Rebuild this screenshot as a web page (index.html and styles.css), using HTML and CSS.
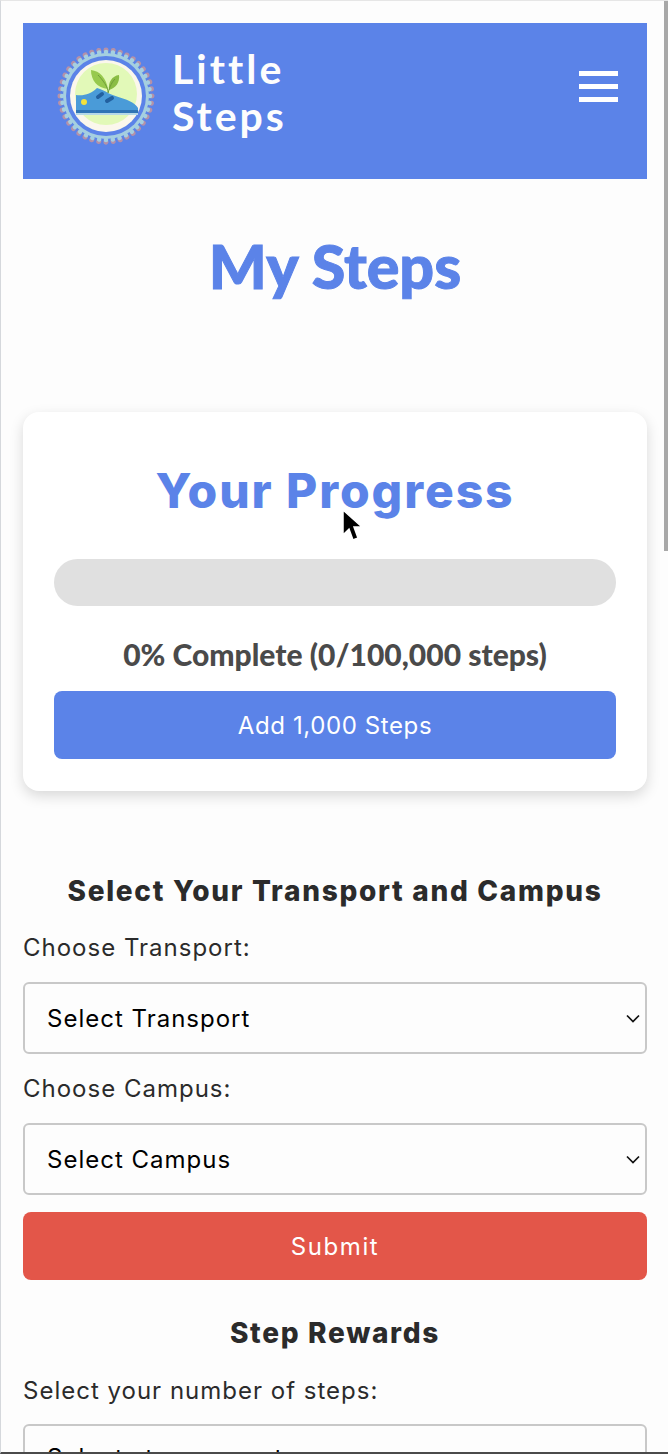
FILE: index.html
```html
<!DOCTYPE html>
<html lang="en">
<head>
    <meta charset="UTF-8">
    <meta name="viewport" content="width=device-width, initial-scale=1.0">
    <title>Little Steps - My Steps</title>
    <link rel="stylesheet" href="styles.css">
</head>
<body>
    <header class="site-header">
        <div class="brand">
            <svg class="logo" width="100" height="100" viewBox="0 0 100 100" aria-hidden="true">
                <circle cx="50" cy="50" r="46" fill="none" stroke="#b591a8" stroke-width="5" stroke-linecap="round" stroke-dasharray="0.01 0.99" pathLength="40"/>
                <circle cx="50" cy="50" r="44" fill="none" stroke="#a5cfe0" stroke-width="4.5" stroke-linecap="round" stroke-dasharray="0.01 0.99" pathLength="40"/>
                <circle cx="50" cy="50" r="43" fill="#a5cfe0"/>
                <circle cx="50" cy="50" r="40" fill="#5b83e8"/>
                <circle cx="50" cy="50" r="36" fill="#fbf7ec"/>
                <circle cx="50" cy="48" r="31" fill="#e2f9b8"/>
                <path d="M52 43C50 32 44 25 35 24C35 34 41 42 52 43Z" fill="#97c94d"/>
                <path d="M53 44C60 42 64 36 63 29C56 30 52 36 53 44Z" fill="#8abd45"/>
                <path d="M52 47C53 42 46 33 42 29M52 47C54 40 56 36 59 33" fill="none" stroke="#6f9c3a" stroke-width="1"/>
                <path d="M20 49C28 50 35 48 41 42C45 43 49 45 52 47C60 51 78 54 82 62V66H20Z" fill="#4a9bd8"/>
                <rect x="20" y="64" width="62" height="3" fill="#2f74b5"/>
                <rect x="20" y="67" width="62" height="2" fill="#b5d8e8"/>
                <path d="M42 51L46 48M51 55L56 52" stroke="#22609f" stroke-width="4" stroke-linecap="round"/>
                <circle cx="28" cy="56" r="3" fill="#f3e23c"/>
            </svg>
            <div class="brand-name">Little<br>Steps</div>
        </div>
        <div class="menu-icon">
            <span></span>
            <span></span>
            <span></span>
        </div>
    </header>

    <h1 class="page-title">My Steps</h1>

    <section class="progress-card">
        <h2>Your Progress</h2>
        <div class="progress-bar"></div>
        <p class="progress-text">0% Complete (0/100,000 steps)</p>
        <button class="button">Add 1,000 Steps</button>
    </section>

    <section class="form-section">
        <h3>Select Your Transport and Campus</h3>
        <label for="transport">Choose Transport:</label>
        <select id="transport"><option>Select Transport</option></select>
        <label for="campus">Choose Campus:</label>
        <select id="campus"><option>Select Campus</option></select>
        <button class="button button-red">Submit</button>
    </section>

    <section class="form-section rewards">
        <h3>Step Rewards</h3>
        <label for="steps">Select your number of steps:</label>
        <select id="steps"><option>Select step amount</option></select>
    </section>

    <div class="scroll-thumb"></div>
    <svg class="cursor" width="22" height="34" viewBox="0 0 22 34" aria-hidden="true">
        <path d="M2 1V26L8 20L12 31L17 29L13 18H21Z" fill="#000" stroke="#fff" stroke-width="1.5"/>
    </svg>
</body>
</html>
```

FILE: styles.css
```css
html {
    height: 100%;
    overflow: hidden;
}
body {
    font-family: 'Inter', 'Open Sans', sans-serif;
    background-color: #fdfdfd;
    color: #2b2b2b;
    margin: 0;
    padding: 22px 21px 0 22px;
    border-left: 1px solid #d5d8dc;
    border-top: 1px solid #e6e6e6;
    border-bottom: 2px solid #4a4a4a;
    height: 100%;
    box-sizing: border-box;
    overflow: hidden;
    position: relative;
}
.site-header {
    display: flex;
    justify-content: space-between;
    align-items: flex-start;
    background-color: #5b83e8;
    height: 156px;
    box-sizing: border-box;
    padding: 23px 29px 0 33px;
}
.brand {
    display: flex;
    align-items: flex-start;
    gap: 16px;
}
.brand-name {
    font-family: 'Lato', sans-serif;
    font-weight: 700;
    font-size: 41px;
    line-height: 47px;
    letter-spacing: 3px;
    color: #fdfdfd;
    margin-top: -1px;
}
.menu-icon {
    display: flex;
    flex-direction: column;
    gap: 8px;
    margin-top: 25px;
}
.menu-icon span {
    display: block;
    width: 39px;
    height: 5px;
    background-color: #fff;
}
.page-title {
    font-family: 'Lato', sans-serif;
    font-weight: 900;
    font-size: 61px;
    line-height: 72px;
    color: #5b83e8;
    text-align: center;
    margin: 51px 0 110px;
    -webkit-text-stroke: 1px #5b83e8;
}
.progress-card {
    background-color: #fff;
    border-radius: 16px;
    box-shadow: 0 5px 14px rgba(0, 0, 0, 0.15);
    padding: 48px 31px 32px;
    text-align: center;
}
.progress-card h2 {
    font-size: 48px;
    line-height: 62px;
    font-weight: 800;
    letter-spacing: 1.9px;
    color: #5b83e8;
    margin: 0 0 37px;
}
.progress-bar {
    height: 47px;
    background-color: #e0e0e0;
    border-radius: 24px;
}
.progress-text {
    font-family: 'Lato', sans-serif;
    font-weight: 900;
    font-size: 30px;
    line-height: 36px;
    color: #4a4a4a;
    margin: 30px 0 19px;
}
.button {
    display: block;
    width: 100%;
    height: 68px;
    background-color: #5b83e8;
    color: #fff;
    border: none;
    border-radius: 8px;
    font-family: inherit;
    font-size: 24px;
    letter-spacing: 0.6px;
}
.button-red {
    background-color: #e35649;
    margin-top: 17px;
    letter-spacing: 1.6px;
}
.form-section {
    margin-top: 80px;
}
.form-section h3 {
    font-size: 28px;
    line-height: 40px;
    font-weight: 800;
    letter-spacing: 1.7px;
    text-align: center;
    margin: 0 0 19px;
}
.form-section label {
    display: block;
    font-size: 24px;
    line-height: 35px;
    letter-spacing: 1px;
}
.form-section select {
    display: block;
    width: 100%;
    height: 72px;
    margin: 17px 0;
    padding: 0 40px 0 22px;
    font-family: inherit;
    font-size: 24px;
    letter-spacing: 1px;
    color: #000;
    appearance: none;
    background-color: #fdfdfd;
    background-image: url("data:image/svg+xml,%3Csvg xmlns='http://www.w3.org/2000/svg' width='14' height='9' viewBox='0 0 14 9'%3E%3Cpath d='M1 1.5L7 7.5L13 1.5' fill='none' stroke='%23111' stroke-width='1.7'/%3E%3C/svg%3E");
    background-repeat: no-repeat;
    background-position: right 5px center;
    border: 2px solid #c8c8c8;
    border-radius: 6px;
}
.rewards {
    margin-top: 33px;
}
.rewards h3 {
    margin-bottom: 20px;
}
.form-section.rewards select {
    margin-top: 16px;
    padding-bottom: 6px;
}
.scroll-thumb {
    position: absolute;
    top: 0;
    right: 0;
    width: 4px;
    height: 550px;
    background-color: #a8a8a8;
}
.cursor {
    position: absolute;
    top: 508px;
    left: 340px;
}
```
